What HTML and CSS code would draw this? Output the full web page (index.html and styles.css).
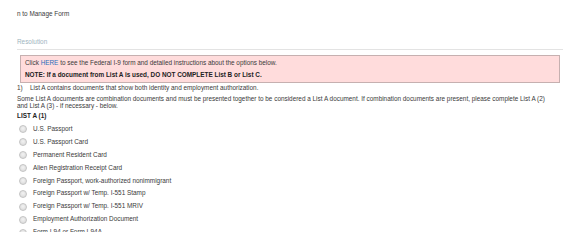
FILE: index.html
```html
<!DOCTYPE html>
<html>
<head>
<meta charset="utf-8">
<link rel="stylesheet" href="styles.css">
</head>
<body>
<div class="page">
  <div class="title">n to Manage Form</div>
  <div class="section-head">Resolution</div>
  <div class="alert">
    <div class="alert-line">Click <span class="link">HERE</span> to see the Federal I-9 form and detailed instructions about the options below.</div>
    <div class="alert-line strong">NOTE: If a document from List A is used, DO NOT COMPLETE List B or List C.</div>
  </div>
  <div class="step"><span class="num">1)</span>List A contains documents that show both identity and employment authorization.</div>
  <div class="para">Some List A documents are combination documents and must be presented together to be considered a List A document. If combination documents are present, please complete List A (2) and List A (3) - if necessary - below.</div>
  <div class="list-title">LIST A (1)</div>
  <ul class="options">
    <li><span class="radio"></span>U.S. Passport</li>
    <li><span class="radio"></span>U.S. Passport Card</li>
    <li><span class="radio"></span>Permanent Resident Card</li>
    <li><span class="radio"></span>Alien Registration Receipt Card</li>
    <li><span class="radio"></span>Foreign Passport, work-authorized nonimmigrant</li>
    <li><span class="radio"></span>Foreign Passport w/ Temp. I-551 Stamp</li>
    <li><span class="radio"></span>Foreign Passport w/ Temp. I-551 MRIV</li>
    <li><span class="radio"></span>Employment Authorization Document</li>
    <li><span class="radio"></span>Form I-94 or Form I-94A</li>
  </ul>
</div>
</body>
</html>
```
FILE: styles.css
```css
html, body {
  margin: 0;
  padding: 0;
  background: #fff;
}
body {
  font-family: "Liberation Sans", Arial, sans-serif;
  font-size: 6.4px;
  color: #3a3a3a;
  overflow: hidden;
  height: 232px;
}
.page {
  padding: 9px 21px 0 17px;
}
.title {
  line-height: 9px;
}
.section-head {
  margin-top: 19px;
  color: #9db4c0;
  line-height: 9px;
  padding-bottom: 3px;
  border-bottom: 1px solid #e3e3e3;
}
.alert {
  margin: 5px 3px 0 3px;
  background: #ffdcdc;
  border: 1px solid #c6b0b0;
  padding: 1px 4px 2px 4px;
}
.alert-line {
  line-height: 11.5px;
}
.strong {
  font-weight: bold;
  color: #222;
}
.link {
  color: #2a6ebb;
}
.step {
  margin-top: 0;
  line-height: 9px;
}
.num {
  display: inline-block;
  width: 13px;
}
.para {
  margin-top: 3px;
  line-height: 7px;
  padding-right: 10px;
}
.list-title {
  margin-top: 2px;
  font-weight: bold;
  line-height: 10px;
  color: #222;
}
.options {
  list-style: none;
  margin: 1px 0 0 0;
  padding: 0;
}
.options li {
  display: flex;
  align-items: center;
  height: 12.9px;
}
.radio {
  width: 6px;
  height: 6px;
  border-radius: 50%;
  border: 1px solid #c4c4c4;
  background: radial-gradient(circle at 50% 40%, #f2f2f2, #d6d6d6);
  margin: 2px 6px 0 2px;
  flex: none;
}
```
